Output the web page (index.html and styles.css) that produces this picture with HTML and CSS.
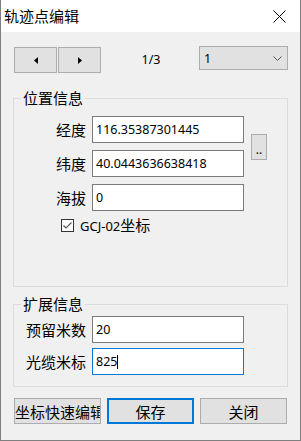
FILE: index.html
```html
<!DOCTYPE html>
<html lang="zh-CN">

<head>
    <meta charset="UTF-8">
    <meta name="viewport" content="width=device-width, initial-scale=1.0">
    <title>轨迹点编辑</title>
    <link rel="stylesheet" href="styles.css">
</head>

<body>
    <div class="window">
        <div class="titlebar">
            <span class="title">轨迹点编辑</span>
            <svg class="close" width="13" height="13" viewBox="0 0 13 13">
                <path d="M0.5 0.5L12.5 12.5M12.5 0.5L0.5 12.5" stroke="#000" stroke-width="1" fill="none" />
            </svg>
        </div>

        <div class="content">
            <div class="nav">
                <div class="nav-btns">
                    <button class="btn nav-btn">
                        <svg width="4" height="7" viewBox="0 0 4 7"><path d="M4 0V7L0 3.5Z" /></svg>
                    </button>
                    <button class="btn nav-btn">
                        <svg width="4" height="7" viewBox="0 0 4 7"><path d="M0 0V7L4 3.5Z" /></svg>
                    </button>
                </div>
                <span class="page">1/3</span>
                <div class="combo">
                    <span class="num">1</span>
                    <svg width="9" height="5" viewBox="0 0 9 5">
                        <path d="M0.5 0.5L4.5 4.5L8.5 0.5" stroke="#555" fill="none" />
                    </svg>
                </div>
            </div>

            <fieldset class="group group-pos">
                <legend>位置信息</legend>
                <div class="form-grid">
                    <label>经度</label>
                    <div class="field">116.35387301445</div>
                    <button class="btn dots">..</button>
                    <label>纬度</label>
                    <div class="field">40.0443636638418</div>
                    <label>海拔</label>
                    <div class="field">0</div>
                </div>
                <div class="check-row">
                    <span class="checkbox">
                        <svg width="11" height="11" viewBox="0 0 11 11">
                            <path d="M1.5 5.5L4 8L9.5 2.5" stroke="#555" stroke-width="1.1" fill="none" />
                        </svg>
                    </span>
                    <span class="check-label"><span class="num">GCJ-02</span>坐标</span>
                </div>
            </fieldset>

            <fieldset class="group group-ext">
                <legend>扩展信息</legend>
                <div class="form-grid ext-grid">
                    <label>预留米数</label>
                    <div class="field">20</div>
                    <label>光缆米标</label>
                    <div class="field focused">825<span class="caret"></span></div>
                </div>
            </fieldset>

            <div class="actions">
                <button class="btn action clip">坐标快速编辑</button>
                <button class="btn action primary">保存</button>
                <button class="btn action">关闭</button>
            </div>
        </div>
    </div>
</body>

</html>
```

FILE: styles.css
```css
body {
    margin: 0;
    font-family: "Noto Sans CJK SC", sans-serif;
    color: #000;
}

.window {
    width: 301px;
    height: 441px;
    box-sizing: border-box;
    border: 1px solid #7f7f7f;
    border-top: none;
    background: #f0f0f0;
}

.titlebar {
    height: 32px;
    background: #fff;
    display: flex;
    align-items: center;
    justify-content: space-between;
    padding: 0 14px 0 3px;
}

.title {
    font-size: 15px;
    line-height: 20px;
}

.close {
    display: block;
}

.content {
    padding: 15px 12px 0;
}

.num {
    font-family: "Noto Sans", sans-serif;
    font-size: 12.5px;
}

.btn {
    font-family: inherit;
    font-size: 15px;
    color: #000;
    background: #e1e1e1;
    border: 1px solid #adadad;
    box-sizing: border-box;
    padding: 0;
    margin: 0;
}

/* top row */
.nav {
    display: flex;
    height: 26px;
}

.nav-btns {
    display: flex;
    gap: 1px;
    margin-left: 1px;
}

.nav-btn {
    width: 43px;
    height: 26px;
    display: flex;
    align-items: center;
    justify-content: center;
}

.nav-btn svg {
    display: block;
}

.page {
    flex: 1;
    text-align: center;
    font-family: "Noto Sans", sans-serif;
    font-size: 12.5px;
    line-height: 26px;
    padding-left: 2px;
}

.combo {
    width: 89px;
    height: 24px;
    margin-top: -1px;
    box-sizing: border-box;
    background: #e1e1e1;
    border: 1px solid #adadad;
    display: flex;
    align-items: center;
    justify-content: space-between;
    padding: 0 5px 0 4px;
}

.combo svg {
    display: block;
}

/* group boxes */
.group {
    margin: 15px 0 0;
    padding: 8px 0 0;
    border: 1px solid #dcdcdc;
    min-width: 0;
    box-sizing: border-box;
}

.group legend {
    font-size: 15px;
    line-height: 20px;
    padding: 0 2px;
    margin-left: 7px;
}

.group-pos {
    height: 199px;
}

.group-ext {
    margin-top: 7px;
    padding: 2px 0 11px;
}

.form-grid {
    display: grid;
    grid-template-columns: 72px 152px 17px;
    grid-auto-rows: 27px;
    column-gap: 6px;
    row-gap: 7px;
}

.ext-grid {
    grid-template-columns: 72px 152px;
    row-gap: 5px;
}

.form-grid label {
    font-size: 15px;
    line-height: 27px;
    text-align: right;
}

.field {
    border: 1px solid #7a7a7a;
    background: #fff;
    box-sizing: border-box;
    padding: 0 3px;
    font-family: "Noto Sans", sans-serif;
    font-size: 12.5px;
    line-height: 25px;
    white-space: nowrap;
    overflow: hidden;
}

.field.focused {
    border-color: #0078d7;
}

.caret {
    display: inline-block;
    width: 1px;
    height: 14px;
    background: #000;
    vertical-align: middle;
    margin-top: -2px;
}

.dots {
    grid-column: 3;
    grid-row: 1 / 3;
    align-self: center;
    height: 26px;
    margin-left: 1px;
    font-family: "Noto Sans", sans-serif;
    font-size: 12px;
    line-height: 30px;
}

.check-row {
    display: flex;
    align-items: center;
    gap: 6px;
    height: 15px;
    margin: 7px 0 0 47px;
}

.checkbox {
    width: 13px;
    height: 13px;
    box-sizing: border-box;
    border: 1px solid #333;
    background: #fff;
}

.checkbox svg {
    display: block;
}

.check-label {
    font-size: 15px;
    line-height: 15px;
}

.check-label .num {
    font-size: 13px;
}

/* bottom buttons */
.actions {
    display: flex;
    gap: 6px;
    padding: 0 1px;
    margin-top: 11px;
}

.action {
    width: 87px;
    height: 26px;
    white-space: nowrap;
    overflow: hidden;
}

.action.clip {
    text-align: left;
}

.action.primary {
    border: 2px solid #0078d7;
}
```
